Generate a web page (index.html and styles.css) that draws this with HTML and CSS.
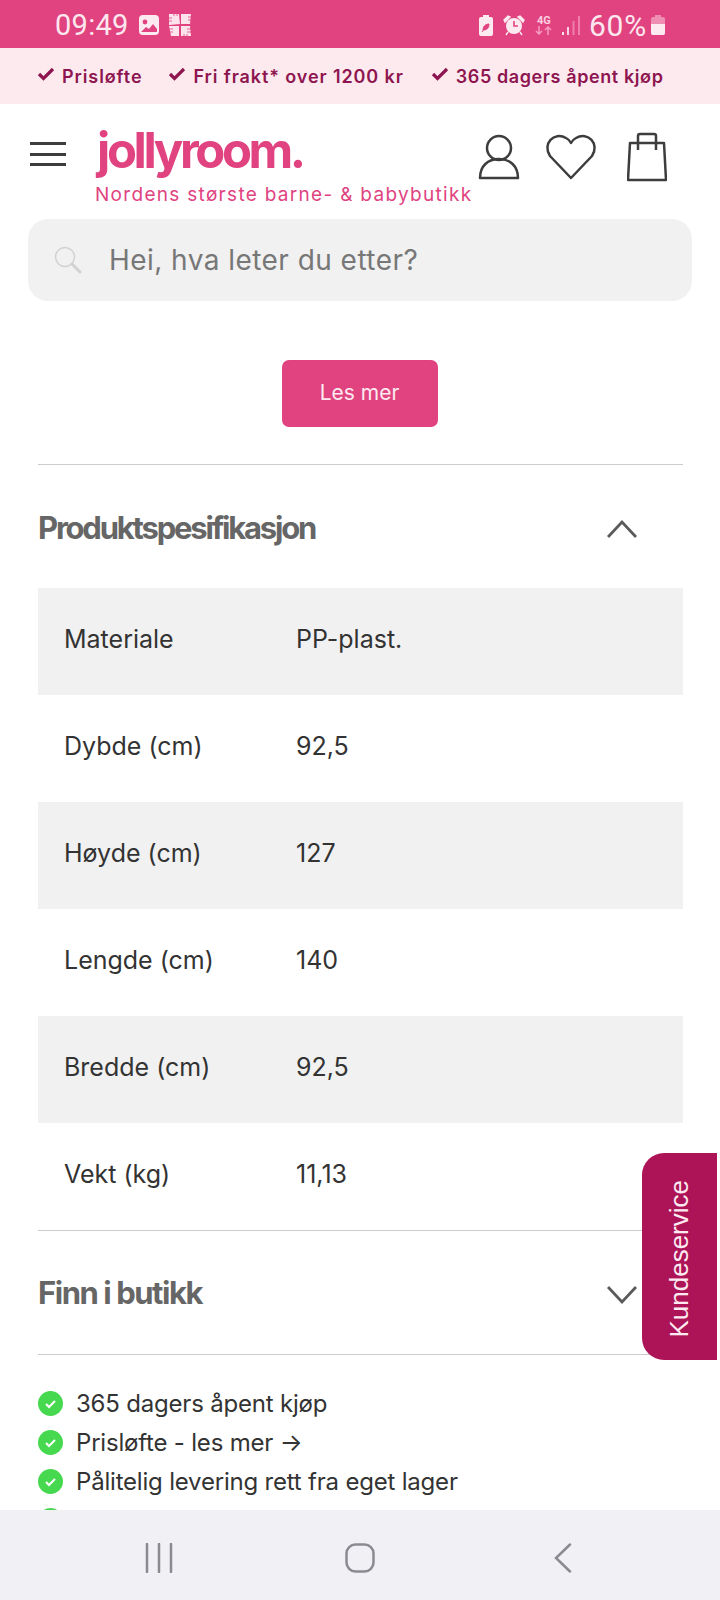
FILE: index.html
```html
<!DOCTYPE html>
<html lang="nb">
<head>
<meta charset="utf-8">
<title>Jollyroom</title>
<link rel="stylesheet" href="styles.css">
</head>
<body>
<div class="status">
  <span class="time">09:49</span>
  <svg class="s-img" width="22" height="22" viewBox="0 0 22 22"><rect x="1" y="1" width="20" height="20" rx="4" fill="#fdeaf1"/><circle cx="7" cy="8" r="2.4" fill="#e0437f"/><path d="M3 18l5-5 3 2 4-5 4 5v3z" fill="#e0437f"/></svg>
  <svg class="s-widget" width="24" height="24" viewBox="0 0 24 24"><path d="M1 1h10l1 10-11 1zM13 1h10l-1 10h-9zM1 13h10v10H3zM13 13h9l1 10H13z" fill="#fde3ec"/><path d="M1 5h3M1 8h3M1 16h4M1 19h4M20 4h4M20 7h4M19 16h5M19 19h5M6 1v2M9 1v2M16 21v3M19 21v3" stroke="#e0437f" stroke-width=".8"/></svg>
  <span class="s-space"></span>
  <svg width="14" height="21" viewBox="0 0 14 21"><path d="M4 0h6v2h2a2 2 0 0 1 2 2v15a2 2 0 0 1-2 2H2a2 2 0 0 1-2-2V4a2 2 0 0 1 2-2h2z" fill="#fdeaf1"/><path d="M4 15c0-4 3-6 6-6 0 4-2 6-6 6zM3 17l3-4" fill="#e0437f" stroke="#e0437f"/></svg>
  <svg class="s-alarm" width="22" height="22" viewBox="0 0 22 22"><circle cx="11" cy="12" r="8" fill="#fdeaf1"/><path d="M1 6l4-4 2 1-5 5zM21 6l-4-4-2 1 5 5zM5 18l-2 3M17 18l2 3" fill="#fdeaf1" stroke="#fdeaf1" stroke-width="1.4"/><path d="M11 7v5h4" fill="none" stroke="#e0437f" stroke-width="1.6"/></svg>
  <span class="s-net"><span class="s-4g">4G</span><svg width="17" height="9" viewBox="0 0 17 9"><path d="M4 0v8M1 5l3 3 3-3M13 9V1M10 4l3-3 3 3" fill="none" stroke="#f59abd" stroke-width="1.5"/></svg></span>
  <svg class="s-signal" width="20" height="20" viewBox="0 0 20 20"><path d="M2 20v-3" stroke="#fde3ec" stroke-width="2"/><path d="M7 20v-8" stroke="#fbd0e0" stroke-width="2"/><path d="M12.500 20V6M18 20V1" stroke="#f07fa9" stroke-width="2"/></svg>
  <span class="pct">60%</span>
  <svg width="14" height="20" viewBox="0 0 14 20"><path d="M4 0h6v2h2a2 2 0 0 1 2 2v14a2 2 0 0 1-2 2H2a2 2 0 0 1-2-2V4a2 2 0 0 1 2-2h2z" fill="#f08db2"/><path d="M0 9h14v9a2 2 0 0 1-2 2H2a2 2 0 0 1-2-2z" fill="#fdeaf1"/></svg>
</div>

<div class="promo">
  <span class="promo-item"><svg width="18" height="14" viewBox="0 0 18 14"><path d="M2 7l4.500 4.500L16 2" fill="none" stroke="#8e1650" stroke-width="3.200"/></svg>Prisløfte</span>
  <span class="promo-item"><svg width="18" height="14" viewBox="0 0 18 14"><path d="M2 7l4.500 4.500L16 2" fill="none" stroke="#8e1650" stroke-width="3.200"/></svg>Fri frakt* over 1200 kr</span>
  <span class="promo-item"><svg width="18" height="14" viewBox="0 0 18 14"><path d="M2 7l4.500 4.500L16 2" fill="none" stroke="#8e1650" stroke-width="3.200"/></svg>365 dagers åpent kjøp</span>
</div>

<header class="head">
  <div class="burger"><i></i><i></i><i></i></div>
  <div class="brand">
    <div class="logo">jollyroom.</div>
    <div class="tag">Nordens største barne- &amp; babybutikk</div>
  </div>
  <div class="head-icons">
    <svg width="42" height="46" viewBox="0 0 42 46"><circle cx="21" cy="14" r="12" fill="none" stroke="#3d3d3d" stroke-width="2.500"/><path d="M2 44c0-12 8-19 19-19s19 7 19 19z" fill="none" stroke="#3d3d3d" stroke-width="2.500" stroke-linejoin="round"/></svg>
    <svg width="52" height="46" viewBox="0 0 52 46"><path d="M26 44L5 22C-3 10 9-3 21 4c2 1 4 3 5 5 1-2 3-4 5-5 12-7 24 6 16 18z" fill="none" stroke="#3d3d3d" stroke-width="2.500" stroke-linejoin="round"/></svg>
    <svg width="40" height="50" viewBox="0 0 40 50"><path d="M3 11h34l2 37H1z" fill="none" stroke="#3d3d3d" stroke-width="2.500" stroke-linejoin="round"/><path d="M11 18V4a2 2 0 0 1 2-2h14a2 2 0 0 1 2 2v14" fill="none" stroke="#3d3d3d" stroke-width="2.500"/></svg>
  </div>
</header>

<div class="search">
  <svg width="28" height="28" viewBox="0 0 28 28"><circle cx="11" cy="11" r="9.500" fill="none" stroke="#d2d2d2" stroke-width="1.500"/><path d="M18 18l8 8" stroke="#d2d2d2" stroke-width="3" stroke-linecap="round"/></svg>
  <span>Hei, hva leter du etter?</span>
</div>

<main class="main">
  <div class="btn-wrap"><a class="btn">Les mer</a></div>
  <section class="acc">
    <h2>Produktspesifikasjon</h2>
    <svg class="chev" width="30" height="20" viewBox="0 0 30 20"><path d="M1 18L15 3l14 15" fill="none" stroke="#5a5a5a" stroke-width="2.800"/></svg>
  </section>
  <div class="spec">
    <div class="row"><span class="k">Materiale</span><span>PP-plast.</span></div>
    <div class="row"><span class="k">Dybde (cm)</span><span>92,5</span></div>
    <div class="row"><span class="k">Høyde (cm)</span><span>127</span></div>
    <div class="row"><span class="k">Lengde (cm)</span><span>140</span></div>
    <div class="row"><span class="k">Bredde (cm)</span><span>92,5</span></div>
    <div class="row"><span class="k">Vekt (kg)</span><span>11,13</span></div>
  </div>
  <section class="acc acc-2">
    <h2>Finn i butikk</h2>
    <svg class="chev" width="30" height="20" viewBox="0 0 30 20"><path d="M1 2l14 15L29 2" fill="none" stroke="#5a5a5a" stroke-width="2.800"/></svg>
  </section>
  <ul class="usp">
    <li><svg width="25" height="25" viewBox="0 0 25 25"><circle cx="12.500" cy="12.500" r="12.500" fill="#46d94f"/><path d="M8 13l3 3 6-6" fill="none" stroke="#fff" stroke-width="2"/></svg>365 dagers åpent kjøp</li>
    <li><svg width="25" height="25" viewBox="0 0 25 25"><circle cx="12.500" cy="12.500" r="12.500" fill="#46d94f"/><path d="M8 13l3 3 6-6" fill="none" stroke="#fff" stroke-width="2"/></svg>Prisløfte - les mer →</li>
    <li><svg width="25" height="25" viewBox="0 0 25 25"><circle cx="12.500" cy="12.500" r="12.500" fill="#46d94f"/><path d="M8 13l3 3 6-6" fill="none" stroke="#fff" stroke-width="2"/></svg>Pålitelig levering rett fra eget lager</li>
    <li><svg width="25" height="25" viewBox="0 0 25 25"><circle cx="12.500" cy="12.500" r="12.500" fill="#46d94f"/></svg></li>
  </ul>
  <a class="kunde"><span>Kundeservice</span></a>
</main>

<nav class="nav">
  <svg width="30" height="30" viewBox="0 0 30 30"><path d="M3 1v28M15 1v28M27 1v28" stroke="#8a8a90" stroke-width="2.500" stroke-linecap="round"/></svg>
  <svg width="30" height="30" viewBox="0 0 30 30"><rect x="1.500" y="1.500" width="27" height="27" rx="9" fill="none" stroke="#8a8a90" stroke-width="2.500"/></svg>
  <svg class="nav-back" width="18" height="30" viewBox="0 0 18 30"><path d="M16 1.500L2 15l14 13.500" fill="none" stroke="#8a8a90" stroke-width="2.500" stroke-linecap="round"/></svg>
</nav>
</body>
</html>
```

FILE: styles.css
```css
* { box-sizing: border-box; }
html, body { margin: 0; padding: 0; }
body {
  width: 720px;
  height: 1600px;
  overflow: hidden;
  display: flex;
  flex-direction: column;
  background: #fff;
  color: #333;
  font-family: Inter, "Liberation Sans", sans-serif;
}
.status {
  height: 48px;
  flex: none;
  background: #e0437f;
  color: #fde7ef;
  display: flex;
  align-items: center;
  padding: 2px 55px 0 55px;
  font-family: Roboto, sans-serif;
}
.time { font-size: 29px; letter-spacing: .3px; width: 83px; }
.s-widget { margin-left: 8px; }
.s-space { flex: 1; }
.s-alarm { margin-left: 10px; }
.s-net { display: flex; flex-direction: column; align-items: center; margin-left: 10px; width: 18px; }
.s-4g { font-size: 11px; font-weight: 700; line-height: 11px; color: #fbd0e0; }
.s-signal { margin-left: 8px; }
.pct { font-size: 30px; letter-spacing: .8px; margin: 0 4px 0 8px; }

.promo {
  height: 56px;
  flex: none;
  background: #fdeaef;
  color: #8e1650;
  display: flex;
  align-items: center;
  padding: 0 0 0 37px;
  gap: 26px;
  font-size: 18px;
  font-weight: 600;
  letter-spacing: .9px;
}
.promo-item { display: flex; align-items: center; gap: 7px; white-space: nowrap; }
.promo-item svg { margin-top: -4px; }
.promo-item:last-child { margin-left: 1px; letter-spacing: .6px; }

.head {
  height: 115px;
  flex: none;
  display: flex;
  align-items: flex-start;
  padding: 38px 0 0 30px;
  position: relative;
}
.burger { width: 36px; height: 24px; display: flex; flex-direction: column; justify-content: space-between; }
.burger i { display: block; height: 3px; background: #3d3d3d; }
.brand { margin: -20px 0 0 29px; width: 379px; }
.logo { font-size: 49px; line-height: 58px; font-weight: 700; color: #e0437f; letter-spacing: -3.4px; padding-left: 2px; }
.tag { font-size: 19px; line-height: 24px; color: #e0437f; letter-spacing: 1.3px; margin-top: 3px; white-space: nowrap; }
.head-icons { display: flex; align-items: flex-start; margin: -8px 0 0 4px; }
.head-icons svg:nth-child(2) { margin-left: 25px; }
.head-icons svg:nth-child(3) { margin-left: 30px; margin-top: -2px; }

.search {
  height: 82px;
  flex: none;
  margin: 0 28px;
  background: #f1f1f1;
  border-radius: 20px;
  display: flex;
  align-items: center;
  padding: 0 0 0 26px;
  gap: 27px;
  font-size: 28px;
  letter-spacing: .45px;
  color: #777;
}

.main { flex: 1; min-height: 0; overflow: hidden; position: relative; padding: 59px 37px 0 38px; }
.btn-wrap { display: flex; justify-content: center; }
.btn {
  width: 156px; height: 67px;
  margin-right: 2px;
  padding-bottom: 2px;
  background: #e0437f;
  color: #fdeaf1;
  border-radius: 7px;
  display: flex; align-items: center; justify-content: center;
  font-size: 21px;
}
.acc {
  display: flex;
  align-items: center;
  justify-content: space-between;
  height: 124px;
  margin-top: 37px;
  padding-right: 46px;
  border-top: 1px solid #ccc;
}
.acc h2 { margin: 2px 0 0; font-size: 31px; font-weight: 700; color: #666; letter-spacing: -2.2px; }
.acc-2 h2 { margin-top: 0; letter-spacing: -1.45px; }
.chev { margin-top: 4px; }
.spec { border-bottom: 1px solid #ccc; }
.row { height: 107px; display: flex; align-items: center; padding: 0 0 6px 26px; font-size: 25px; color: #333; }
.row:nth-child(odd) { background: #f1f1f2; }
.k { width: 232px; }
.acc-2 { margin-top: 0; border-top: 0; height: 124px; border-bottom: 1px solid #ccc; }
.usp { list-style: none; margin: 0; padding: 29px 0 0 0; font-size: 24px; letter-spacing: -.2px; color: #333; }
.usp li { display: flex; align-items: center; gap: 13px; height: 39px; white-space: nowrap; }
.kunde {
  position: absolute;
  left: 642px;
  top: 852px;
  width: 75px;
  height: 207px;
  padding-top: 4px;
  background: #ad1457;
  color: #fdeaf1;
  border-radius: 22px 0 0 22px;
  display: flex;
  align-items: center;
  justify-content: center;
}
.kunde span { writing-mode: vertical-rl; transform: rotate(180deg); font-family: "Liberation Sans", sans-serif; font-size: 26px; }

.nav {
  height: 90px;
  flex: none;
  background: #f0f0f5;
  display: flex;
  align-items: center;
  padding: 6px 0 0 144px;
  gap: 171px;
}
.nav-back { margin-left: 8px; }
```
